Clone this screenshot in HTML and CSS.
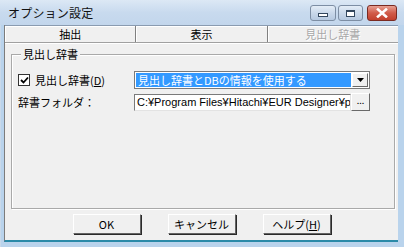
FILE: index.html
```html
<!DOCTYPE html>
<html lang="ja">
<head>
    <meta charset="UTF-8">
    <title>オプション設定</title>
    <link rel="stylesheet" href="styles.css">
</head>
<body>
    <div class="window">
        <div class="titlebar">
            <span class="title">オプション設定</span>
            <div class="caption-buttons">
                <span class="cap-btn min"><i></i></span>
                <span class="cap-btn max"><i></i></span>
                <span class="cap-btn close">
                    <svg width="14" height="10" viewBox="0 0 14 10">
                        <path d="M3 1.5 L11 8.5 M11 1.5 L3 8.5" stroke="#fff" stroke-width="2.6" stroke-linecap="square"/>
                    </svg>
                </span>
            </div>
        </div>

        <div class="client">
            <div class="tabs">
                <div class="tab">抽出</div>
                <div class="tab">表示</div>
                <div class="tab disabled">見出し辞書</div>
            </div>

            <div class="page">
                <fieldset class="group">
                    <legend>見出し辞書</legend>
                    <div class="form-grid">
                        <label class="check">
                            <span class="checkbox">
                                <svg width="9" height="9" viewBox="0 0 9 9">
                                    <path d="M1 4 L3.5 6.5 L8 1.5" stroke="#000" stroke-width="1.8" fill="none"/>
                                </svg>
                            </span>
                            <span>見出し辞書(<u>D</u>)</span>
                        </label>
                        <div class="combo">
                            <span class="combo-value">見出し辞書とDBの情報を使用する</span>
                            <span class="combo-arrow">
                                <svg width="7" height="4" viewBox="0 0 7 4"><path d="M0 0 H7 L3.5 4 Z" fill="#000"/></svg>
                            </span>
                        </div>

                        <span class="field-label">辞書フォルダ：</span>
                        <div class="path-row">
                            <div class="textfield">C:¥Program Files¥Hitachi¥EUR Designer¥p</div>
                            <span class="browse">...</span>
                        </div>
                    </div>
                </fieldset>
            </div>

            <div class="buttons">
                <span class="btn">OK</span>
                <span class="btn">キャンセル</span>
                <span class="btn">ヘルプ(<u>H</u>)</span>
            </div>
        </div>
    </div>
</body>
</html>
```

FILE: styles.css
```css
* {
    margin: 0;
    padding: 0;
    box-sizing: border-box;
}

body {
    width: 404px;
    height: 247px;
    overflow: hidden;
    font-family: "Noto Sans CJK JP", "Liberation Sans", sans-serif;
    font-size: 11px;
    color: #000;
}

/* Fenster */
.window {
    height: 247px;
    display: flex;
    flex-direction: column;
    background: #b9d3ec;
    padding: 0 6px 0 3px;
    border-left: 1px solid #c9d9ea;
}

.titlebar {
    height: 25px;
    flex-shrink: 0;
    display: flex;
    align-items: center;
    justify-content: space-between;
    background: linear-gradient(180deg, #dce8f5, #c8daee 50%, #c2d6ec);
    margin: 0 -6px 0 -4px;
    padding-right: 7px;
    padding-left: 8px;
}

.title {
    font-size: 12px;
    color: #111;
    letter-spacing: 0.2px;
}

.caption-buttons {
    display: flex;
    gap: 2px;
    align-self: flex-start;
    margin-top: 5px;
}

.cap-btn {
    width: 26px;
    height: 16px;
    border: 1px solid #7d8ea4;
    border-radius: 3px;
    background: linear-gradient(180deg, #e4edf7, #c9d8ea 50%, #b6c9e0);
    display: flex;
    align-items: center;
    justify-content: center;
}

.cap-btn.min i {
    width: 10px;
    height: 4px;
    margin-top: 4px;
    border: 1px solid #33475e;
    background: #fff;
}

.cap-btn.max {
    width: 25px;
}

.cap-btn.max i {
    width: 9px;
    height: 7px;
    border: 1px solid #33475e;
    border-top-width: 2px;
    background: #fff;
}

.cap-btn.close {
    width: 30px;
    margin-left: 2px;
    border-color: #7a2a22;
    background: linear-gradient(180deg, #e8a093, #d15c4a 50%, #c2402d);
}

/* Client */
.client {
    flex: 1;
    display: flex;
    flex-direction: column;
    background: #f0f0f0;
    border-left: 1px solid #7c7c7c;
    border-bottom: 2px solid #2b8aa8;
    margin-bottom: 5px;
}

.tabs {
    display: flex;
    height: 18px;
    border-top: 1px solid #8a9bb0;
    border-bottom: 1px solid #a0a0a0;
}

.tab {
    flex: 1;
    display: flex;
    align-items: center;
    justify-content: center;
    border-right: 1px solid #808080;
    box-shadow: inset 1px 1px #fff;
    line-height: 1;
}

.tab.disabled {
    color: #a8a8a8;
    text-shadow: 1px 1px #fff;
    border-right: none;
}

.page {
    flex: 1;
    display: flex;
    padding: 3px 3px 0 6px;
    border-top: 1px solid #fff;
}

.group {
    flex: 1;
    border: 1px solid #a9a9a9;
    box-shadow: inset 1px 1px #fff, 1px 1px #fff;
    padding: 10px 0 0 6px;
}

.group legend {
    margin-left: 3px;
    padding: 0 2px;
    line-height: 14px;
    font-size: 11px;
    background: #f0f0f0;
}

.form-grid {
    display: grid;
    grid-template-columns: 116px 236px;
    grid-auto-rows: 18px;
    row-gap: 4px;
    align-items: center;
}

.check {
    display: flex;
    align-items: center;
    gap: 4px;
}

.checkbox {
    width: 12px;
    height: 12px;
    border: 1px solid #333;
    background: #fff;
    display: flex;
    align-items: center;
    justify-content: center;
    margin-right: 1px;
}

.combo {
    height: 18px;
    display: flex;
    align-items: stretch;
    background: #fff;
    border: 1px solid #7a7a7a;
    padding: 1px;
}

.combo-value {
    flex: 1;
    background: #3399ff;
    color: #fff;
    padding-left: 2px;
    line-height: 14px;
    white-space: nowrap;
    overflow: hidden;
}

.combo-arrow {
    width: 16px;
    margin-left: 1px;
    background: #f0f0f0;
    border: 1px solid;
    border-color: #fff #696969 #696969 #fff;
    display: flex;
    align-items: center;
    justify-content: center;
}

.path-row {
    display: flex;
    height: 18px;
    width: 236px;
}

.textfield {
    flex: 1;
    height: 17px;
    margin-top: 1px;
    background: #fff;
    border: 1px solid;
    border-color: #7a7a7a #e3e3e3 #e3e3e3 #7a7a7a;
    font-family: "Liberation Sans", sans-serif;
    font-size: 11px;
    line-height: 14px;
    padding-left: 2px;
    white-space: nowrap;
    overflow: hidden;
}

.browse {
    width: 19px;
    background: #f0f0f0;
    border: 1px solid;
    border-color: #fff #696969 #696969 #fff;
    font-size: 9px;
    display: flex;
    align-items: center;
    justify-content: center;
    padding-bottom: 3px;
}

/* Knöpfe */
.buttons {
    height: 31px;
    display: flex;
    justify-content: center;
    align-items: flex-start;
    gap: 27px;
    padding-top: 5px;
}

.btn {
    width: 68px;
    height: 20px;
    display: flex;
    align-items: center;
    justify-content: center;
    background: #f0f0f0;
    border: 1px solid;
    border-color: #fff #646464 #646464 #fff;
    box-shadow: 1px 1px #2a2a2a;
    font-size: 11px;
}
```
